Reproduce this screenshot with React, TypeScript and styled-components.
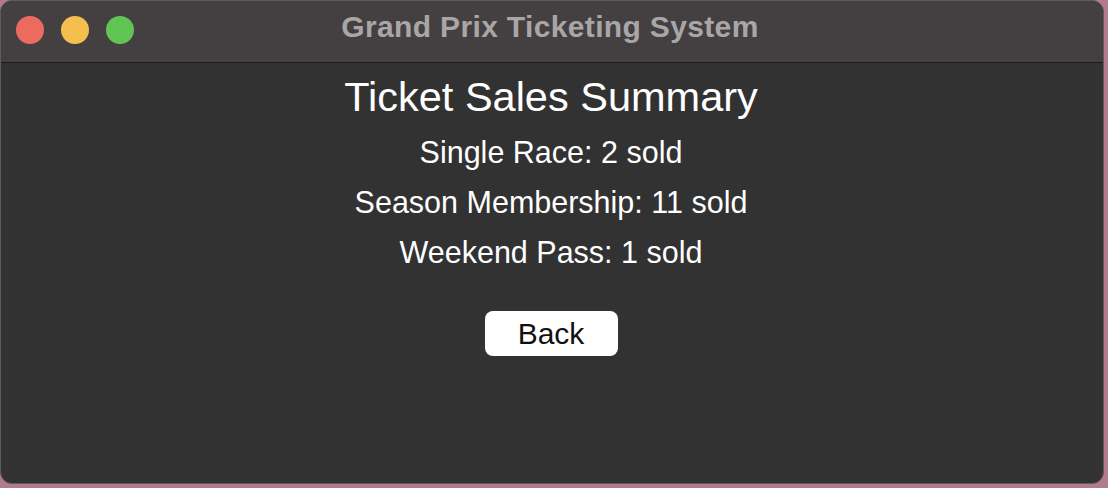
import styled, { createGlobalStyle } from 'styled-components'

const Global = createGlobalStyle`
  html, body {
    margin: 0;
    padding: 0;
    background: #b07a90;
  }
  body {
    font-family: "Liberation Sans", Arial, sans-serif;
  }
`

const counts = [
  { name: 'Single Race', sold: 2 },
  { name: 'Season Membership', sold: 11 },
  { name: 'Weekend Pass', sold: 1 },
]

export default function App() {
  return (
    <>
      <Global />
      <Window>
        <TitleBar>
          <Lights>
            <Light color="#ec6a5e" />
            <Light color="#f4bf4f" />
            <Light color="#61c554" />
          </Lights>
          <Title>Grand Prix Ticketing System</Title>
        </TitleBar>
        <Content>
          <Heading>Ticket Sales Summary</Heading>
          {counts.map((c) => (
            <Line key={c.name}>
              {c.name}: {c.sold} sold
            </Line>
          ))}
          <BackButton>Back</BackButton>
        </Content>
      </Window>
    </>
  )
}

const Window = styled.div`
  width: 1104px;
  height: 484px;
  box-sizing: border-box;
  border-radius: 12px;
  border: 1px solid #5c5c5c;
  background: #323232;
  overflow: hidden;
  display: flex;
  flex-direction: column;
`

const TitleBar = styled.div`
  position: relative;
  height: 61px;
  flex-shrink: 0;
  padding-right: 4px;
  background: #444041;
  border-bottom: 1px solid #1a1a1a;
  display: flex;
  align-items: center;
  justify-content: center;
`

const Lights = styled.div`
  position: absolute;
  left: 15px;
  top: 15px;
  display: flex;
  gap: 17px;
`

const Light = styled.span<{ color: string }>`
  width: 28px;
  height: 28px;
  border-radius: 50%;
  background: ${(p) => p.color};
`

const Title = styled.div`
  color: #a9a6a7;
  font-size: 30px;
  letter-spacing: 0.35px;
  font-weight: bold;
  margin-top: -10px;
`

const Content = styled.div`
  display: flex;
  flex-direction: column;
  align-items: center;
  padding: 10px 2px 0 0;
  color: #ffffff;
`

const Heading = styled.div`
  font-size: 41.5px;
  line-height: 48px;
  margin-bottom: 6px;
`

const Line = styled.div`
  font-size: 30.5px;
  line-height: 50px;
`

const BackButton = styled.button`
  margin-top: 34px;
  width: 133px;
  height: 45px;
  border: none;
  border-radius: 8px;
  background: #ffffff;
  color: #111;
  font-family: "Liberation Sans", Arial, sans-serif;
  font-size: 30px;
  line-height: 45px;
  padding: 0 0 3px;
`
